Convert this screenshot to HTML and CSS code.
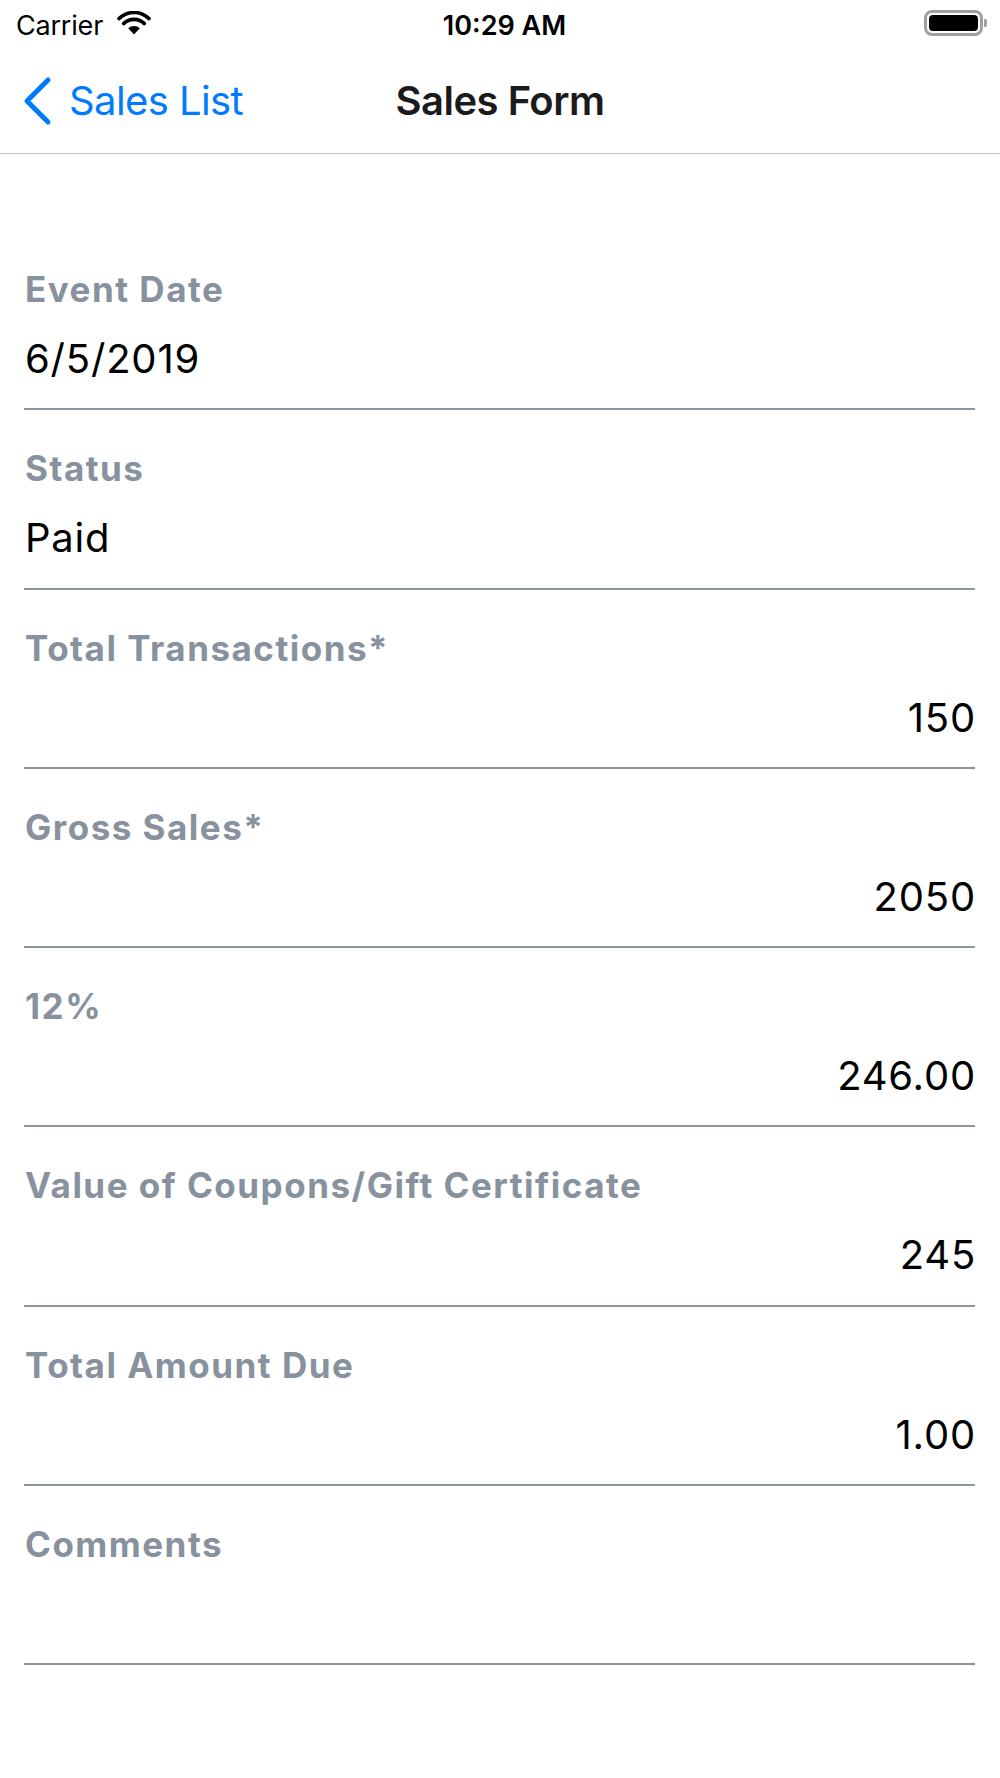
FILE: index.html
```html
<!DOCTYPE html>
<html lang="en">
<head>
<meta charset="utf-8">
<title>Sales Form</title>
<link rel="stylesheet" href="styles.css">
</head>
<body>
<div class="status-bar">
  <div class="sb-left">
    <span class="carrier">Carrier</span>
    <svg class="wifi" width="34" height="24" viewBox="0 0 34 24">
      <path d="M17 23.5 L11.2 17.2 A8.4 8.4 0 0 1 22.8 17.2 Z" fill="#000"/>
      <path d="M6.6 12.6 A14.8 14.8 0 0 1 27.4 12.6" fill="none" stroke="#000" stroke-width="3.6" stroke-linecap="round"/>
      <path d="M2 7.6 A21.5 21.5 0 0 1 32 7.6" fill="none" stroke="#000" stroke-width="3.6" stroke-linecap="round"/>
    </svg>
  </div>
  <div class="time">10:29 AM</div>
  <div class="sb-right">
    <div class="battery"><div class="battery-fill"></div></div>
    <div class="battery-nub"></div>
  </div>
</div>
<div class="nav-bar">
  <div class="back">
    <svg class="chevron" width="30" height="50" viewBox="0 0 30 50">
      <path d="M26 4 L5 25 L26 46" fill="none" stroke="#007AFF" stroke-width="5" stroke-linecap="round" stroke-linejoin="round"/>
    </svg>
    <span class="back-text">Sales List</span>
  </div>
  <div class="title">Sales Form</div>
  <div class="nav-spacer"></div>
</div>
<main class="form">
  <div class="field">
    <div class="label">Event Date</div>
    <div class="value">6/5/2019</div>
  </div>
  <div class="field">
    <div class="label">Status</div>
    <div class="value">Paid</div>
  </div>
  <div class="field">
    <div class="label">Total Transactions*</div>
    <div class="value num">150</div>
  </div>
  <div class="field">
    <div class="label">Gross Sales*</div>
    <div class="value num">2050</div>
  </div>
  <div class="field">
    <div class="label">12%</div>
    <div class="value num">246.00</div>
  </div>
  <div class="field">
    <div class="label">Value of Coupons/Gift Certificate</div>
    <div class="value num">245</div>
  </div>
  <div class="field">
    <div class="label">Total Amount Due</div>
    <div class="value num">1.00</div>
  </div>
  <div class="field">
    <div class="label">Comments</div>
    <div class="value">&nbsp;</div>
  </div>
</main>
</body>
</html>
```
FILE: styles.css
```css
* { box-sizing: border-box; }
html, body {
  margin: 0;
  padding: 0;
  background: #ffffff;
}
body {
  width: 1000px;
  min-height: 1778px;
  font-family: Inter, "Liberation Sans", Arial, sans-serif;
  color: #000;
}
.status-bar {
  height: 48px;
  display: grid;
  grid-template-columns: 1fr auto 1fr;
  align-items: center;
  padding: 3px 13px 0 16px;
}
.sb-left {
  display: flex;
  align-items: center;
  gap: 14px;
}
.carrier {
  font-size: 27px;
  line-height: 32px;
  letter-spacing: -0.2px;
}
.wifi { display: block; margin-top: -5px; }
.time {
  font-size: 27px;
  font-weight: 600;
  line-height: 32px;
  padding-left: 6px;
}
.sb-right {
  display: flex;
  align-items: center;
  justify-content: flex-end;
  gap: 1px;
  margin-top: -3px;
}
.battery {
  width: 59px;
  height: 26px;
  border: 3px solid #a0a0a0;
  border-radius: 8px;
  padding: 2px;
  margin-top: -2px;
}
.battery-fill {
  width: 100%;
  height: 100%;
  background: #000;
  border-radius: 4px;
}
.battery-nub {
  width: 3px;
  height: 8px;
  background: #a0a0a0;
  border-radius: 0 2px 2px 0;
  margin-top: -2px;
}
.nav-bar {
  height: 106px;
  border-bottom: 1.5px solid #c6c6c8;
  display: grid;
  grid-template-columns: 1fr auto 1fr;
  align-items: center;
}
.back {
  display: flex;
  align-items: center;
  padding-left: 22px;
  color: #007AFF;
}
.chevron { display: block; margin-right: 17px; }
.back-text {
  font-size: 40px;
  letter-spacing: -0.6px;
}
.title {
  font-size: 40px;
  font-weight: 600;
  letter-spacing: -0.5px;
  color: #1b1b1b;
}
.form {
  padding: 77px 25px 0 24px;
}
.field {
  padding-top: 38px;
  padding-bottom: 24.3px;
  border-bottom: 2px solid #8b95a0;
}
.label {
  font-size: 35px;
  font-weight: 700;
  line-height: 40px;
  letter-spacing: 1.5px;
  color: #87929e;
  padding-left: 1px;
}
.value {
  margin-top: 25px;
  font-size: 40px;
  line-height: 50px;
  letter-spacing: 0.8px;
  color: #000;
  padding-left: 1px;
}
.value.num {
  text-align: right;
  padding-left: 0;
  margin-right: -1px;
}
```
